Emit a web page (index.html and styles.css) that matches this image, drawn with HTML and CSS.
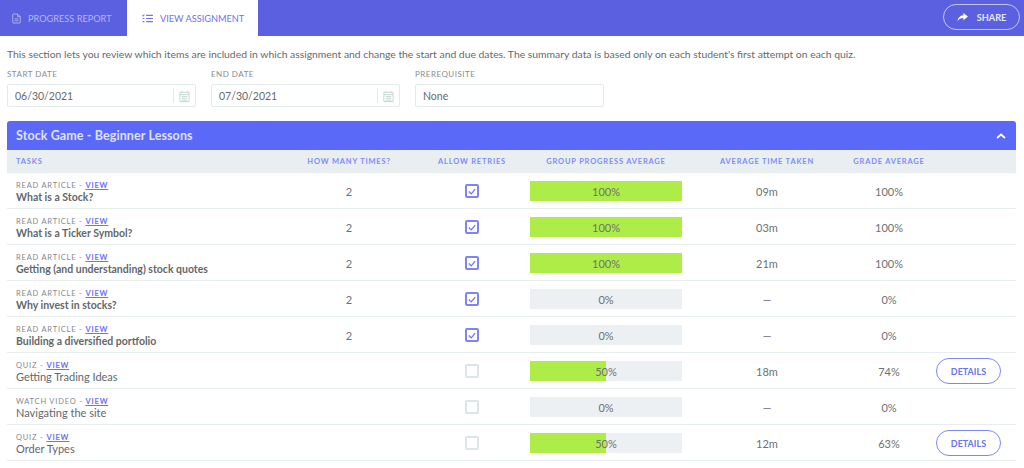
FILE: index.html
```html
<!DOCTYPE html>
<html lang="en">
<head>
<meta charset="utf-8">
<title>View Assignment</title>
<link rel="stylesheet" href="styles.css">
</head>
<body>
<header class="topbar">
  <nav class="tabs">
    <a class="tab">
      <svg class="tab-icon" viewBox="0 0 12 14"><path d="M1 1.500A.5.5 0 0 1 1.500 1H7.500L11 4.500V12.500a.5.5 0 0 1-.5.5h-9a.5.5 0 0 1-.5-.5Z M7.500 1V4.500H11 M3.500 7.500h5 M3.500 10h5" fill="none" stroke="currentColor" stroke-width="1.200"/></svg>
      PROGRESS REPORT
    </a>
    <a class="tab tab-active">
      <svg class="tab-icon-list" viewBox="0 0 12 10"><path d="M4.500 1.500H12 M4.500 5H12 M4.500 8.500H12 M.5 1.500l.7.7L2.500.7 M.5 5h2 M.5 8.500h2" fill="none" stroke="currentColor" stroke-width="1.200"/></svg>
      VIEW ASSIGNMENT
    </a>
  </nav>
  <button class="share">
    <svg class="share-icon" viewBox="0 0 12 10"><path d="M7 0l5 4-5 4V5.600C4 5.600 2 6.500.5 9.500.8 5.500 3 2.800 7 2.500Z" fill="currentColor"/></svg>
    SHARE
  </button>
</header>

<main class="content">
  <p class="intro">This section lets you review which items are included in which assignment and change the start and due dates. The summary data is based only on each student's first attempt on each quiz.</p>

  <div class="filters">
    <div class="field">
      <label class="field-label">START DATE</label>
      <div class="input input-date"><span>06/30/2021</span>
        <span class="cal"><svg viewBox="0 0 12 13"><path d="M1 2.500h10v10H1Z M1 5h10 M3 1v2 M9 1v2 M3 7h6 M3 9h6 M3 11h6" fill="none" stroke="currentColor" stroke-width="1"/></svg></span>
      </div>
    </div>
    <div class="field">
      <label class="field-label">END DATE</label>
      <div class="input input-date"><span>07/30/2021</span>
        <span class="cal"><svg viewBox="0 0 12 13"><path d="M1 2.500h10v10H1Z M1 5h10 M3 1v2 M9 1v2 M3 7h6 M3 9h6 M3 11h6" fill="none" stroke="currentColor" stroke-width="1"/></svg></span>
      </div>
    </div>
    <div class="field">
      <label class="field-label">PREREQUISITE</label>
      <div class="input input-pre"><span>None</span></div>
    </div>
  </div>

  <section class="card">
    <div class="card-head">
      <h2>Stock Game - Beginner Lessons</h2>
      <svg class="chev" viewBox="0 0 10 6"><path d="M1 5l4-3.500L9 5" fill="none" stroke="currentColor" stroke-width="1.800"/></svg>
    </div>
    <div class="grid-row thead">
      <div class="th-task">TASKS</div>
      <div>HOW MANY TIMES?</div>
      <div>ALLOW RETRIES</div>
      <div>GROUP PROGRESS AVERAGE</div>
      <div>AVERAGE TIME TAKEN</div>
      <div>GRADE AVERAGE</div>
      <div></div>
    </div>

    <div class="grid-row row">
      <div class="task"><div class="kind">READ ARTICLE - <a class="view">VIEW</a></div><div class="name bold">What is a Stock?</div></div>
      <div class="cell">2</div>
      <div class="cell"><span class="check on"><svg viewBox="0 0 10 8"><path d="M1 4l3 3 5-6" fill="none" stroke="currentColor" stroke-width="1.500"/></svg></span></div>
      <div class="bar"><div class="fill" style="width:100%"></div><span>100%</span></div>
      <div class="cell">09m</div>
      <div class="cell">100%</div>
      <div></div>
    </div>
    <div class="grid-row row">
      <div class="task"><div class="kind">READ ARTICLE - <a class="view">VIEW</a></div><div class="name bold">What is a Ticker Symbol?</div></div>
      <div class="cell">2</div>
      <div class="cell"><span class="check on"><svg viewBox="0 0 10 8"><path d="M1 4l3 3 5-6" fill="none" stroke="currentColor" stroke-width="1.500"/></svg></span></div>
      <div class="bar"><div class="fill" style="width:100%"></div><span>100%</span></div>
      <div class="cell">03m</div>
      <div class="cell">100%</div>
      <div></div>
    </div>
    <div class="grid-row row">
      <div class="task"><div class="kind">READ ARTICLE - <a class="view">VIEW</a></div><div class="name bold">Getting (and understanding) stock quotes</div></div>
      <div class="cell">2</div>
      <div class="cell"><span class="check on"><svg viewBox="0 0 10 8"><path d="M1 4l3 3 5-6" fill="none" stroke="currentColor" stroke-width="1.500"/></svg></span></div>
      <div class="bar"><div class="fill" style="width:100%"></div><span>100%</span></div>
      <div class="cell">21m</div>
      <div class="cell">100%</div>
      <div></div>
    </div>
    <div class="grid-row row">
      <div class="task"><div class="kind">READ ARTICLE - <a class="view">VIEW</a></div><div class="name bold">Why invest in stocks?</div></div>
      <div class="cell">2</div>
      <div class="cell"><span class="check on"><svg viewBox="0 0 10 8"><path d="M1 4l3 3 5-6" fill="none" stroke="currentColor" stroke-width="1.500"/></svg></span></div>
      <div class="bar"><span>0%</span></div>
      <div class="cell">—</div>
      <div class="cell">0%</div>
      <div></div>
    </div>
    <div class="grid-row row">
      <div class="task"><div class="kind">READ ARTICLE - <a class="view">VIEW</a></div><div class="name bold">Building a diversified portfolio</div></div>
      <div class="cell">2</div>
      <div class="cell"><span class="check on"><svg viewBox="0 0 10 8"><path d="M1 4l3 3 5-6" fill="none" stroke="currentColor" stroke-width="1.500"/></svg></span></div>
      <div class="bar"><span>0%</span></div>
      <div class="cell">—</div>
      <div class="cell">0%</div>
      <div></div>
    </div>
    <div class="grid-row row">
      <div class="task"><div class="kind">QUIZ - <a class="view">VIEW</a></div><div class="name">Getting Trading Ideas</div></div>
      <div class="cell"></div>
      <div class="cell"><span class="check"></span></div>
      <div class="bar"><div class="fill" style="width:50%"></div><span>50%</span></div>
      <div class="cell">18m</div>
      <div class="cell">74%</div>
      <div class="action"><button class="details">DETAILS</button></div>
    </div>
    <div class="grid-row row">
      <div class="task"><div class="kind">WATCH VIDEO - <a class="view">VIEW</a></div><div class="name">Navigating the site</div></div>
      <div class="cell"></div>
      <div class="cell"><span class="check"></span></div>
      <div class="bar"><span>0%</span></div>
      <div class="cell">—</div>
      <div class="cell">0%</div>
      <div></div>
    </div>
    <div class="grid-row row">
      <div class="task"><div class="kind">QUIZ - <a class="view">VIEW</a></div><div class="name">Order Types</div></div>
      <div class="cell"></div>
      <div class="cell"><span class="check"></span></div>
      <div class="bar"><div class="fill" style="width:50%"></div><span>50%</span></div>
      <div class="cell">12m</div>
      <div class="cell">63%</div>
      <div class="action"><button class="details">DETAILS</button></div>
    </div>
  </section>
</main>
</body>
</html>
```

FILE: styles.css
```css
* { box-sizing: border-box; }
html, body { margin: 0; height: 100%; overflow: hidden; }
body { background: #fff; font-family: Lato, "Liberation Sans", sans-serif; color: #5f6468; }

.topbar { height: 36px; background: #5a60e0; display: flex; justify-content: space-between; align-items: stretch; }
.tabs { display: flex; gap: 1px; }
.tab { display: flex; align-items: center; font-size: 9.200px; color: #b3b6f0; }
.tab:first-child { width: 126px; padding-left: 12px; }
.tab-icon { width: 9px; height: 11px; margin-right: 7px; }
.tab-active { width: 131px; padding-left: 15px; background: #fff; color: #6a72f5; }
.tab-icon-list { width: 11px; height: 9px; margin-right: 7px; }
.share { align-self: flex-start; margin: 4px 4px 0 0; width: 77px; height: 26px; border: 1.500px solid #c4c6f5; border-radius: 13px; background: transparent; color: #e6e7fb; font: 700 9.200px Lato, sans-serif; display: flex; align-items: center; justify-content: center; gap: 9px; padding: 0; }
.share-icon { width: 11px; height: 9px; color: #fff; }

.content { padding: 0 8px 0 7px; }
.intro { margin: 0; padding-top: 11px; font-size: 10.370px; line-height: 14px; color: #65696d; white-space: nowrap; }

.filters { display: flex; gap: 15px; margin-top: 8px; }
.field-label { display: block; font-size: 8px; letter-spacing: .5px; color: #888c90; line-height: 10px; margin-bottom: 5px; }
.input { height: 23px; border: 1px solid #e3eaea; border-radius: 2px; display: flex; align-items: center; font-size: 10.500px; color: #65696d; padding-left: 7px; }
.input-date { width: 189px; justify-content: space-between; }
.input-pre { width: 189px; }
.cal { width: 22px; height: 15px; border-left: 1px solid #e3eaea; display: flex; align-items: center; justify-content: center; color: #c2d4d0; }
.cal svg { width: 11px; height: 12px; }

.card { margin-top: 14px; width: 1009px; }
.card-head { height: 29px; background: #5b69f8; border-radius: 3px 3px 0 0; display: flex; align-items: center; justify-content: space-between; padding: 0 10px 0 9px; color: #dfe2fe; }
.card-head h2 { margin: 0; font-size: 12.500px; font-weight: 700; letter-spacing: .1px; }
.chev { width: 10px; height: 6px; color: #fff; }

.grid-row { display: grid; grid-template-columns: 277px 130px 116px 152px 170px 74px 90px; align-items: center; }
.thead { height: 23px; background: #e9eff0; font-size: 7.500px; font-weight: 700; letter-spacing: .8px; color: #7f8bf7; text-align: center; }
.thead .th-task { text-align: left; padding-left: 9px; }
.row { height: 36px; border-bottom: 1.500px solid #e6eeee; padding-top: 1px; }

.task { padding: 7px 0 0 9px; align-self: start; }
.kind { font-size: 7.500px; letter-spacing: .8px; color: #85898d; line-height: 10px; }
.view { color: #6a72f5; font-weight: 700; text-decoration: underline; }
.name { font-size: 11px; line-height: 14px; margin-top: -1px; color: #63676b; }
.name.bold { font-size: 10.500px; font-weight: 700; }
.cell { font-size: 11px; text-align: center; color: #6d7175; display: flex; justify-content: center; align-items: center; }
.check { width: 14px; height: 14px; border: 2px solid #dce6e8; border-radius: 2px; display: flex; align-items: center; justify-content: center; }
.check.on { border-color: #7c84f6; color: #6a72f5; }
.check svg { width: 8px; height: 7px; }
.bar { position: relative; height: 20px; background: #ecf0f2; display: flex; align-items: center; justify-content: center; font-size: 11px; color: #6d7175; }
.bar .fill { position: absolute; left: 0; top: 0; bottom: 0; background: #aeed47; }
.bar span { position: relative; }
.action { padding-left: 10px; }
.details { display: block; width: 65px; height: 26px; border: 1.500px solid #8088f7; border-radius: 13px; background: #fff; color: #6a72f5; font: 700 9px Lato, sans-serif; padding: 0; }
```
